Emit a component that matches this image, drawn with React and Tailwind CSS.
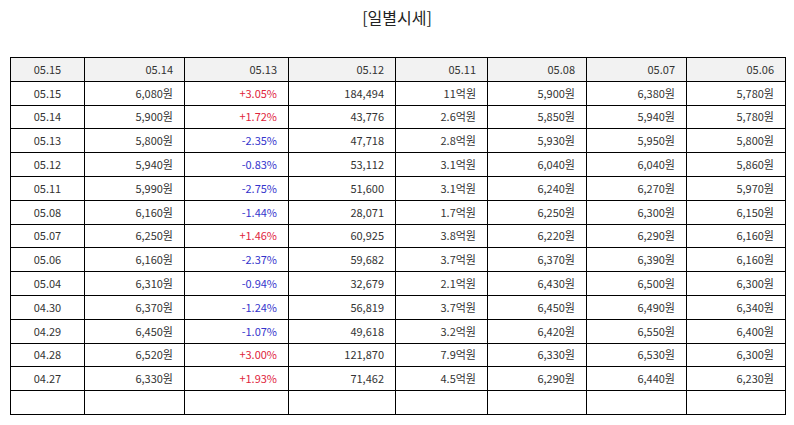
import React from "react";

const header = ["05.15", "05.14", "05.13", "05.12", "05.11", "05.08", "05.07", "05.06"];

const rows = [
  ["05.15", "6,080원", "+3.05%", "184,494", "11억원", "5,900원", "6,380원", "5,780원"],
  ["05.14", "5,900원", "+1.72%", "43,776", "2.6억원", "5,850원", "5,940원", "5,780원"],
  ["05.13", "5,800원", "-2.35%", "47,718", "2.8억원", "5,930원", "5,950원", "5,800원"],
  ["05.12", "5,940원", "-0.83%", "53,112", "3.1억원", "6,040원", "6,040원", "5,860원"],
  ["05.11", "5,990원", "-2.75%", "51,600", "3.1억원", "6,240원", "6,270원", "5,970원"],
  ["05.08", "6,160원", "-1.44%", "28,071", "1.7억원", "6,250원", "6,300원", "6,150원"],
  ["05.07", "6,250원", "+1.46%", "60,925", "3.8억원", "6,220원", "6,290원", "6,160원"],
  ["05.06", "6,160원", "-2.37%", "59,682", "3.7억원", "6,370원", "6,390원", "6,160원"],
  ["05.04", "6,310원", "-0.94%", "32,679", "2.1억원", "6,430원", "6,500원", "6,300원"],
  ["04.30", "6,370원", "-1.24%", "56,819", "3.7억원", "6,450원", "6,490원", "6,340원"],
  ["04.29", "6,450원", "-1.07%", "49,618", "3.2억원", "6,420원", "6,550원", "6,400원"],
  ["04.28", "6,520원", "+3.00%", "121,870", "7.9억원", "6,330원", "6,530원", "6,300원"],
  ["04.27", "6,330원", "+1.93%", "71,462", "4.5억원", "6,290원", "6,440원", "6,230원"],
  ["", "", "", "", "", "", "", ""],
];

const widths = ["w-[74px]", "w-[100px]", "w-[104px]", "w-[107px]", "w-[92px]", "w-[99px]", "w-[100px]", "w-[99px]"];

const rateColor = (v) =>
  v.startsWith("+") ? "text-[#e0243c]" : v.startsWith("-") ? "text-[#3535cc]" : "";

const Cell = ({ i, children, head }) => (
  <td
    className={`${widths[i]} h-[23.8px] border border-black p-0 ${
      i === 0 ? "text-center" : "text-right pr-[11px]"
    } ${head ? "bg-[#f2f2f2]" : ""} ${i === 2 && !head ? rateColor(children) : ""}`}>
    {children}
  </td>
);

const App = () => {
  return (
    <div className="w-[794px] h-[425px] bg-white font-['Noto_Sans_CJK_KR',sans-serif] text-[#333]">
      <h2 className="pt-[6px] h-[57px] text-center text-[16px] leading-[22px] text-[#222]">
        [일별시세]
      </h2>
      <table className="ml-[10px] w-[776px] table-fixed border-collapse text-[11px] leading-none">
        <thead>
          <tr>
            {header.map((h, i) => (
              <Cell key={i} i={i} head>
                {h}
              </Cell>
            ))}
          </tr>
        </thead>
        <tbody>
          {rows.map((row, r) => (
            <tr key={r}>
              {row.map((v, i) => (
                <Cell key={i} i={i}>
                  {v}
                </Cell>
              ))}
            </tr>
          ))}
        </tbody>
      </table>
    </div>
  );
};

export default App;
